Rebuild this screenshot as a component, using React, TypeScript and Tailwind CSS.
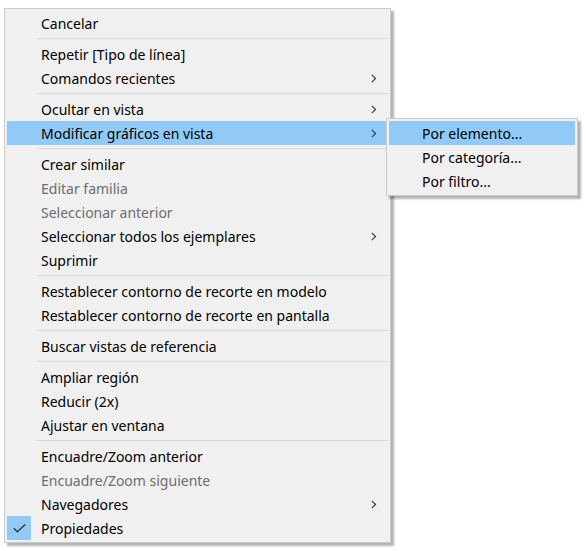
import React from 'react';

type Item =
    | { kind: 'sep' }
    | { kind: 'item'; label: string; disabled?: boolean; submenu?: boolean; active?: boolean; checked?: boolean };

const items: Item[] = [
    { kind: 'item', label: 'Cancelar' },
    { kind: 'sep' },
    { kind: 'item', label: 'Repetir [Tipo de línea]' },
    { kind: 'item', label: 'Comandos recientes', submenu: true },
    { kind: 'sep' },
    { kind: 'item', label: 'Ocultar en vista', submenu: true },
    { kind: 'item', label: 'Modificar gráficos en vista', submenu: true, active: true },
    { kind: 'sep' },
    { kind: 'item', label: 'Crear similar' },
    { kind: 'item', label: 'Editar familia', disabled: true },
    { kind: 'item', label: 'Seleccionar anterior', disabled: true },
    { kind: 'item', label: 'Seleccionar todos los ejemplares', submenu: true },
    { kind: 'item', label: 'Suprimir' },
    { kind: 'sep' },
    { kind: 'item', label: 'Restablecer contorno de recorte en modelo' },
    { kind: 'item', label: 'Restablecer contorno de recorte en pantalla' },
    { kind: 'sep' },
    { kind: 'item', label: 'Buscar vistas de referencia' },
    { kind: 'sep' },
    { kind: 'item', label: 'Ampliar región' },
    { kind: 'item', label: 'Reducir (2x)' },
    { kind: 'item', label: 'Ajustar en ventana' },
    { kind: 'sep' },
    { kind: 'item', label: 'Encuadre/Zoom anterior' },
    { kind: 'item', label: 'Encuadre/Zoom siguiente', disabled: true },
    { kind: 'item', label: 'Navegadores', submenu: true },
    { kind: 'item', label: 'Propiedades', checked: true },
];

const subItems = ['Por elemento...', 'Por categoría...', 'Por filtro...'];

const Chevron = () => (
    <svg width="6" height="9" viewBox="0 0 6 9" className="shrink-0">
        <polyline points="0.8,0.8 4.6,4.5 0.8,8.2" fill="none" stroke="#333" strokeWidth="1.1" />
    </svg>
);

const Check = () => (
    <svg width="13" height="9" viewBox="0 0 13 9">
        <polyline points="0.8,4.2 4.4,7.8 12.2,0.6" fill="none" stroke="#333" strokeWidth="1.3" />
    </svg>
);

const MenuRow: React.FC<{ item: Extract<Item, { kind: 'item' }> }> = ({ item }) => (
    <div className={`flex h-6 items-center ${item.active ? 'bg-[#91c9f7]' : ''}`}>
        <div className={`flex h-6 w-6 shrink-0 items-center justify-center ${item.checked ? 'bg-[#91c9f7]' : ''}`}>
            {item.checked && <Check />}
        </div>
        <span className={`ml-[10px] flex-1 whitespace-nowrap pt-[2px] ${item.disabled ? 'text-[#6d6d6d]' : 'text-black'}`}>
            {item.label}
        </span>
        <div className="mr-[11px] flex w-[6px] justify-center">{item.submenu && <Chevron />}</div>
    </div>
);

export default function App() {
    return (
        <div
            className="relative h-[551px] w-[586px] overflow-hidden bg-white text-[14px] leading-none"
            style={{ fontFamily: '"Segoe UI", "Noto Sans", sans-serif' }}
        >
            {/* main context menu */}
            <div className="ml-[4px] mt-[8px] w-[387px] border border-[#cccccc] bg-[#f0f0f0] p-[2px] shadow-[3px_3px_2px_rgba(0,0,0,0.3)]">
                {items.map((item, i) =>
                    item.kind === 'sep' ? (
                        <div key={i} className="flex h-[7px] items-center pl-[30px]">
                            <div className="h-px w-full bg-[#d7d7d7]" />
                        </div>
                    ) : (
                        <MenuRow key={i} item={item} />
                    )
                )}
            </div>

            {/* flyout for "Modificar gráficos en vista" */}
            <div className="absolute left-[386px] top-[118px] w-[192px] border border-[#cccccc] bg-[#f0f0f0] p-[2px] shadow-[3px_3px_2px_rgba(0,0,0,0.3)]">
                {subItems.map((label, i) => (
                    <div key={label} className={`flex h-6 items-center pl-[33px] pt-[2px] ${i === 0 ? 'bg-[#91c9f7]' : ''}`}>
                        <span className="whitespace-nowrap text-black">{label}</span>
                    </div>
                ))}
            </div>
        </div>
    );
}
